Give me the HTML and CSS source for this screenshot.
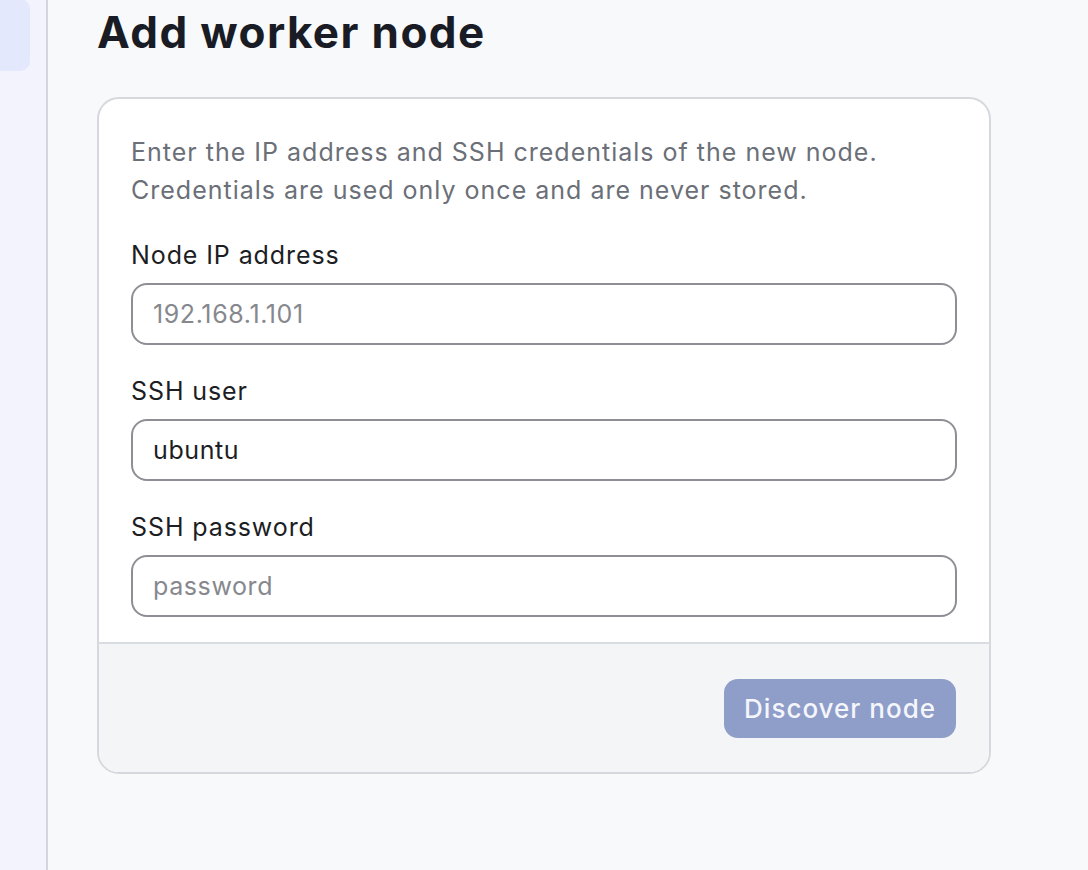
FILE: index.html
```html
<!DOCTYPE html>
<html>
    <head>
        <title>Add worker node</title>
        <meta charset="UTF-8">
        <link rel="stylesheet" href="styles.css">
    </head>
    <body>
        <div id="wrap">
            <div class="sidebar">
                <div class="side-item active"></div>
            </div>
            <div class="main">
                <h1 class="title">Add worker node</h1>
                <form class="card" onsubmit="return false;">
                    <div class="card-body">
                        <p class="intro">
                            Enter the IP address and SSH credentials of the new node.<br>
                            Credentials are used only once and are never stored.
                        </p>
                        <div class="field">
                            <label for="ip">Node IP address</label>
                            <input type="text" id="ip" placeholder="192.168.1.101"/>
                        </div>
                        <div class="field">
                            <label for="user">SSH user</label>
                            <input type="text" id="user" value="ubuntu"/>
                        </div>
                        <div class="field">
                            <label for="pass">SSH password</label>
                            <input type="password" id="pass" placeholder="password"/>
                        </div>
                    </div>
                    <div class="card-foot">
                        <button type="submit" class="button" disabled>Discover node</button>
                    </div>
                </form>
            </div>
        </div>
    </body>
</html>
```

FILE: styles.css
```css
html, body, #wrap {
    margin: 0;
    border: 0;
    padding: 0;
    height: 100%;
    font-family: Inter, "Noto Sans", sans-serif;
    color: #1c1e24;
    background-color: #f8f9fb;
}
#wrap {
    display: flex;
    overflow: hidden;
}
.sidebar {
    width: 46px;
    flex: none;
    background-color: #f2f3fc;
    border-right: 2px solid #d3d5df;
}
.side-item {
    height: 72px;
    width: 30px;
    margin-top: -1px;
    border-radius: 0 10px 10px 0;
}
.side-item.active {
    background-color: #e3e8fd;
}
.main {
    flex: 1;
    padding: 0 0 0 49px;
}
.title {
    margin: 6px 0 0 0;
    font-size: 44px;
    line-height: 52px;
    font-weight: 700;
    letter-spacing: 1.4px;
    color: #1a1c25;
}
.card {
    margin-top: 39px;
    width: 890px;
    border: 2px solid #d6d8de;
    border-radius: 22px;
    background-color: #fff;
    overflow: hidden;
}
.card-body {
    padding: 34px 32px 25px 32px;
}
.intro {
    margin: 0 0 28px 0;
    font-size: 25px;
    line-height: 38px;
    letter-spacing: 1px;
    color: #6b6f78;
}
.field {
    margin-bottom: 28px;
}
.field:last-child {
    margin-bottom: 0;
}
.field label {
    display: block;
    font-size: 25px;
    line-height: 36px;
    letter-spacing: 0.9px;
    margin-bottom: 10px;
    color: #1c1e24;
}
.field input {
    display: block;
    box-sizing: border-box;
    width: 826px;
    height: 62px;
    margin: 0;
    padding: 0 20px;
    border: 2px solid #8e8f94;
    border-radius: 16px;
    font-family: inherit;
    font-size: 25px;
    letter-spacing: 0.6px;
    color: #1c1e24;
    background: #fff;
    outline: none;
}
.field input::placeholder {
    color: #86888e;
}
.card-foot {
    border-top: 2px solid #d9dce1;
    background-color: #f4f5f7;
    padding: 35px 33px 34px 0;
    display: flex;
    justify-content: flex-end;
}
.button {
    height: 59px;
    padding: 0 20px;
    border: 0;
    border-radius: 14px;
    background-color: #8f9dc9;
    color: #f4f6fb;
    font-family: inherit;
    font-size: 26px;
    font-weight: 500;
    letter-spacing: 1px;
}
```
